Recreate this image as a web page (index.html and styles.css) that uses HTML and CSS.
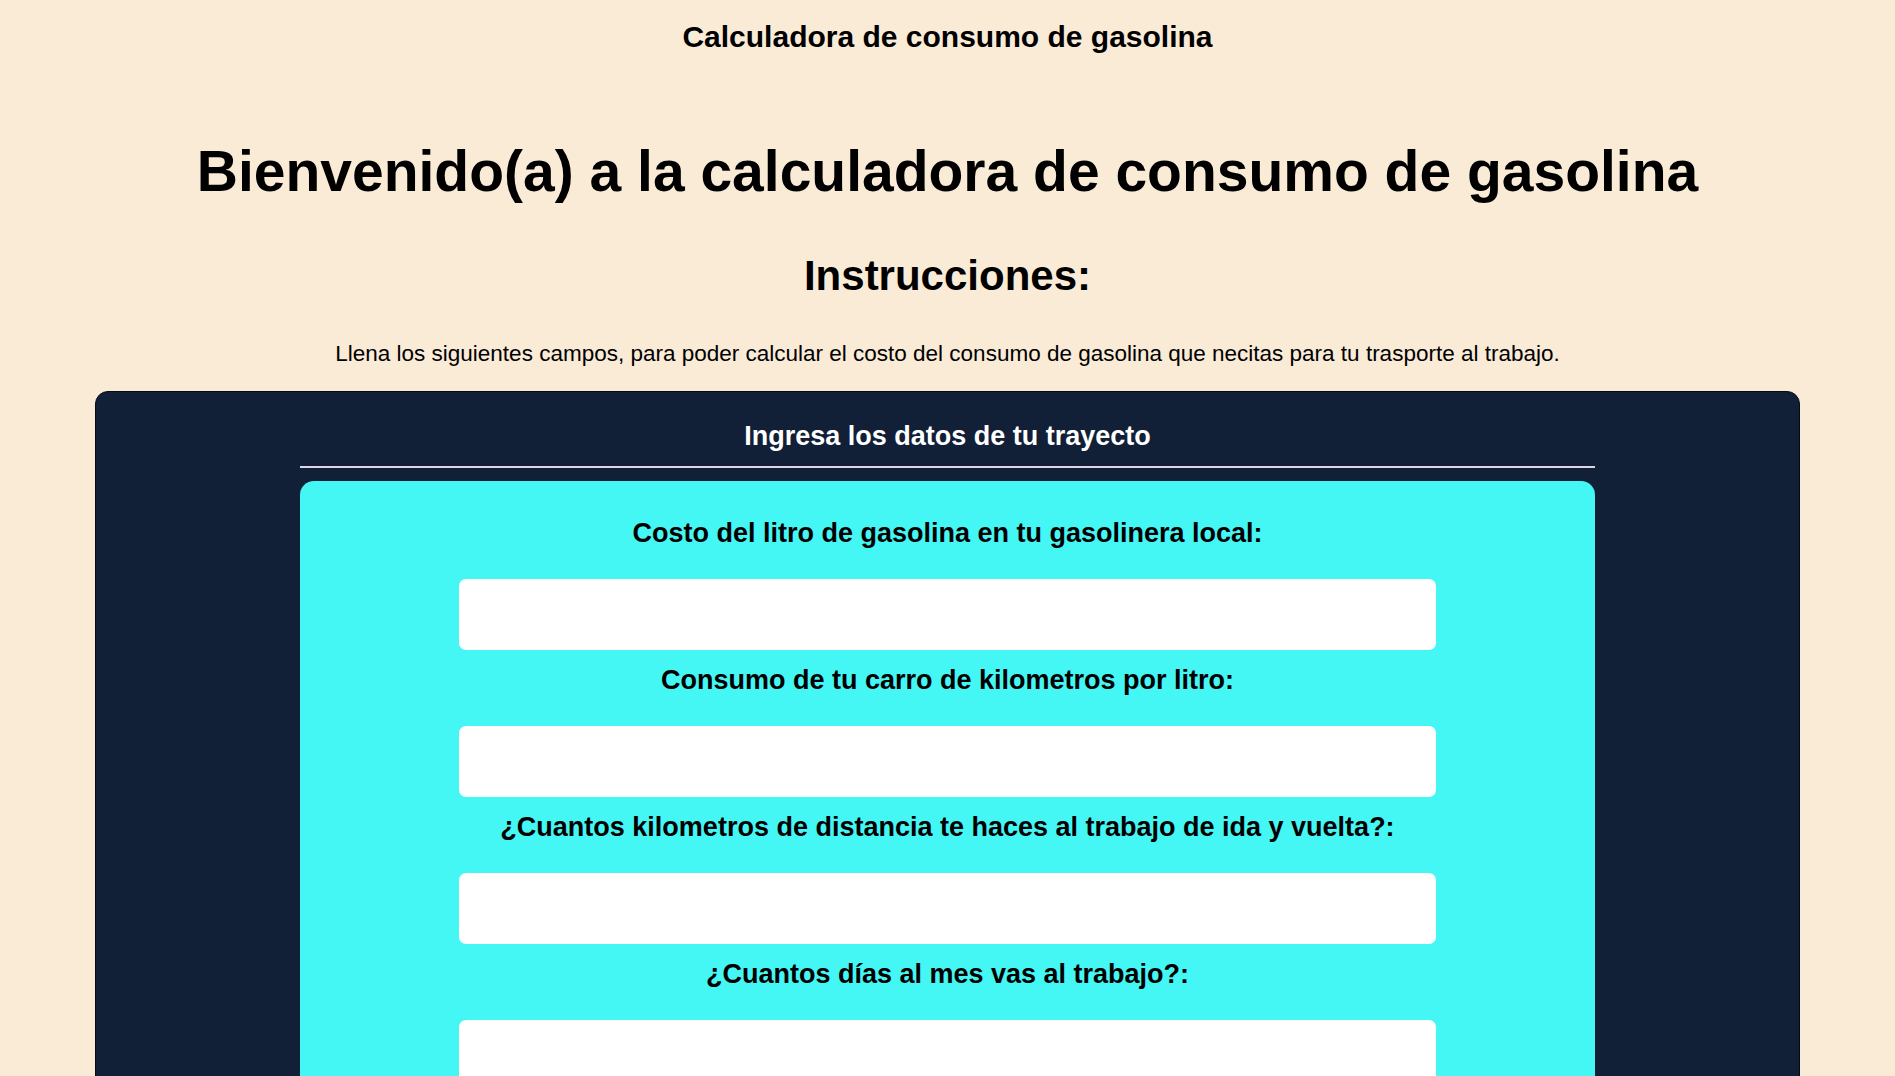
FILE: index.html
```html
<!DOCTYPE html>
<html lang="es">
<head>
<meta charset="utf-8">
<title>Calculadora de consumo de gasolina</title>
<link rel="stylesheet" href="styles.css">
</head>
<body>
<header class="top">
  <div class="brand">Calculadora de consumo de gasolina</div>
</header>
<main>
  <h1 class="title">Bienvenido(a) a la calculadora de consumo de gasolina</h1>
  <h2 class="subtitle">Instrucciones:</h2>
  <p class="intro">Llena los siguientes campos, para poder calcular el costo del consumo de gasolina que necitas para tu trasporte al trabajo.</p>
  <section class="card">
    <div class="inner">
      <h3 class="card-title">Ingresa los datos de tu trayecto</h3>
      <hr class="rule">
      <form class="form">
        <label class="label" for="costo">Costo del litro de gasolina en tu gasolinera local:</label>
        <input class="field" id="costo" type="text">
        <label class="label" for="consumo">Consumo de tu carro de kilometros por litro:</label>
        <input class="field" id="consumo" type="text">
        <label class="label" for="km">¿Cuantos kilometros de distancia te haces al trabajo de ida y vuelta?:</label>
        <input class="field" id="km" type="text">
        <label class="label" for="dias">¿Cuantos días al mes vas al trabajo?:</label>
        <input class="field" id="dias" type="text">
      </form>
    </div>
  </section>
</main>
</body>
</html>
```
FILE: styles.css
```css
* { box-sizing: border-box; }
html, body { margin: 0; padding: 0; }
body {
  background: #faebd7;
  font-family: "Liberation Sans", Arial, sans-serif;
  color: #000;
}
.top {
  padding-top: 20px;
  text-align: center;
}
.brand {
  font-size: 30px;
  line-height: 34px;
  font-weight: bold;
}
.title {
  margin: 84px 0 0;
  text-align: center;
  font-size: 57px;
  line-height: 66px;
  font-weight: bold;
}
.subtitle {
  margin: 48px 0 0;
  text-align: center;
  font-size: 42px;
  line-height: 48px;
  font-weight: bold;
}
.intro {
  margin: 41px 0 0;
  text-align: center;
  font-size: 22.5px;
  line-height: 26px;
}
.card {
  width: 90%;
  margin: 24px auto 0;
  background: #111f37;
  border: 1px solid #050a14;
  border-radius: 13px;
  padding-top: 29px;
  padding-bottom: 40px;
}
.inner {
  width: 76%;
  margin: 0 auto;
}
.card-title {
  margin: 0;
  text-align: center;
  color: #fff;
  font-size: 27px;
  line-height: 31px;
  font-weight: bold;
}
.rule {
  margin: 14px 0 0;
  border: 0;
  height: 2px;
  background: #dcd6e0;
}
.form {
  margin-top: 13px;
  background: #44f6f4;
  border-radius: 14px;
  padding: 37px 0 30px;
  display: flex;
  flex-direction: column;
  align-items: center;
}
.label {
  display: block;
  text-align: center;
  font-size: 27px;
  line-height: 31px;
  font-weight: bold;
  margin-bottom: 30px;
}
.field {
  display: block;
  width: 75.45%;
  height: 71px;
  margin-bottom: 15px;
  border: 0;
  border-radius: 7px;
  background: #fff;
  font-size: 20px;
  padding: 0 12px;
}
```
